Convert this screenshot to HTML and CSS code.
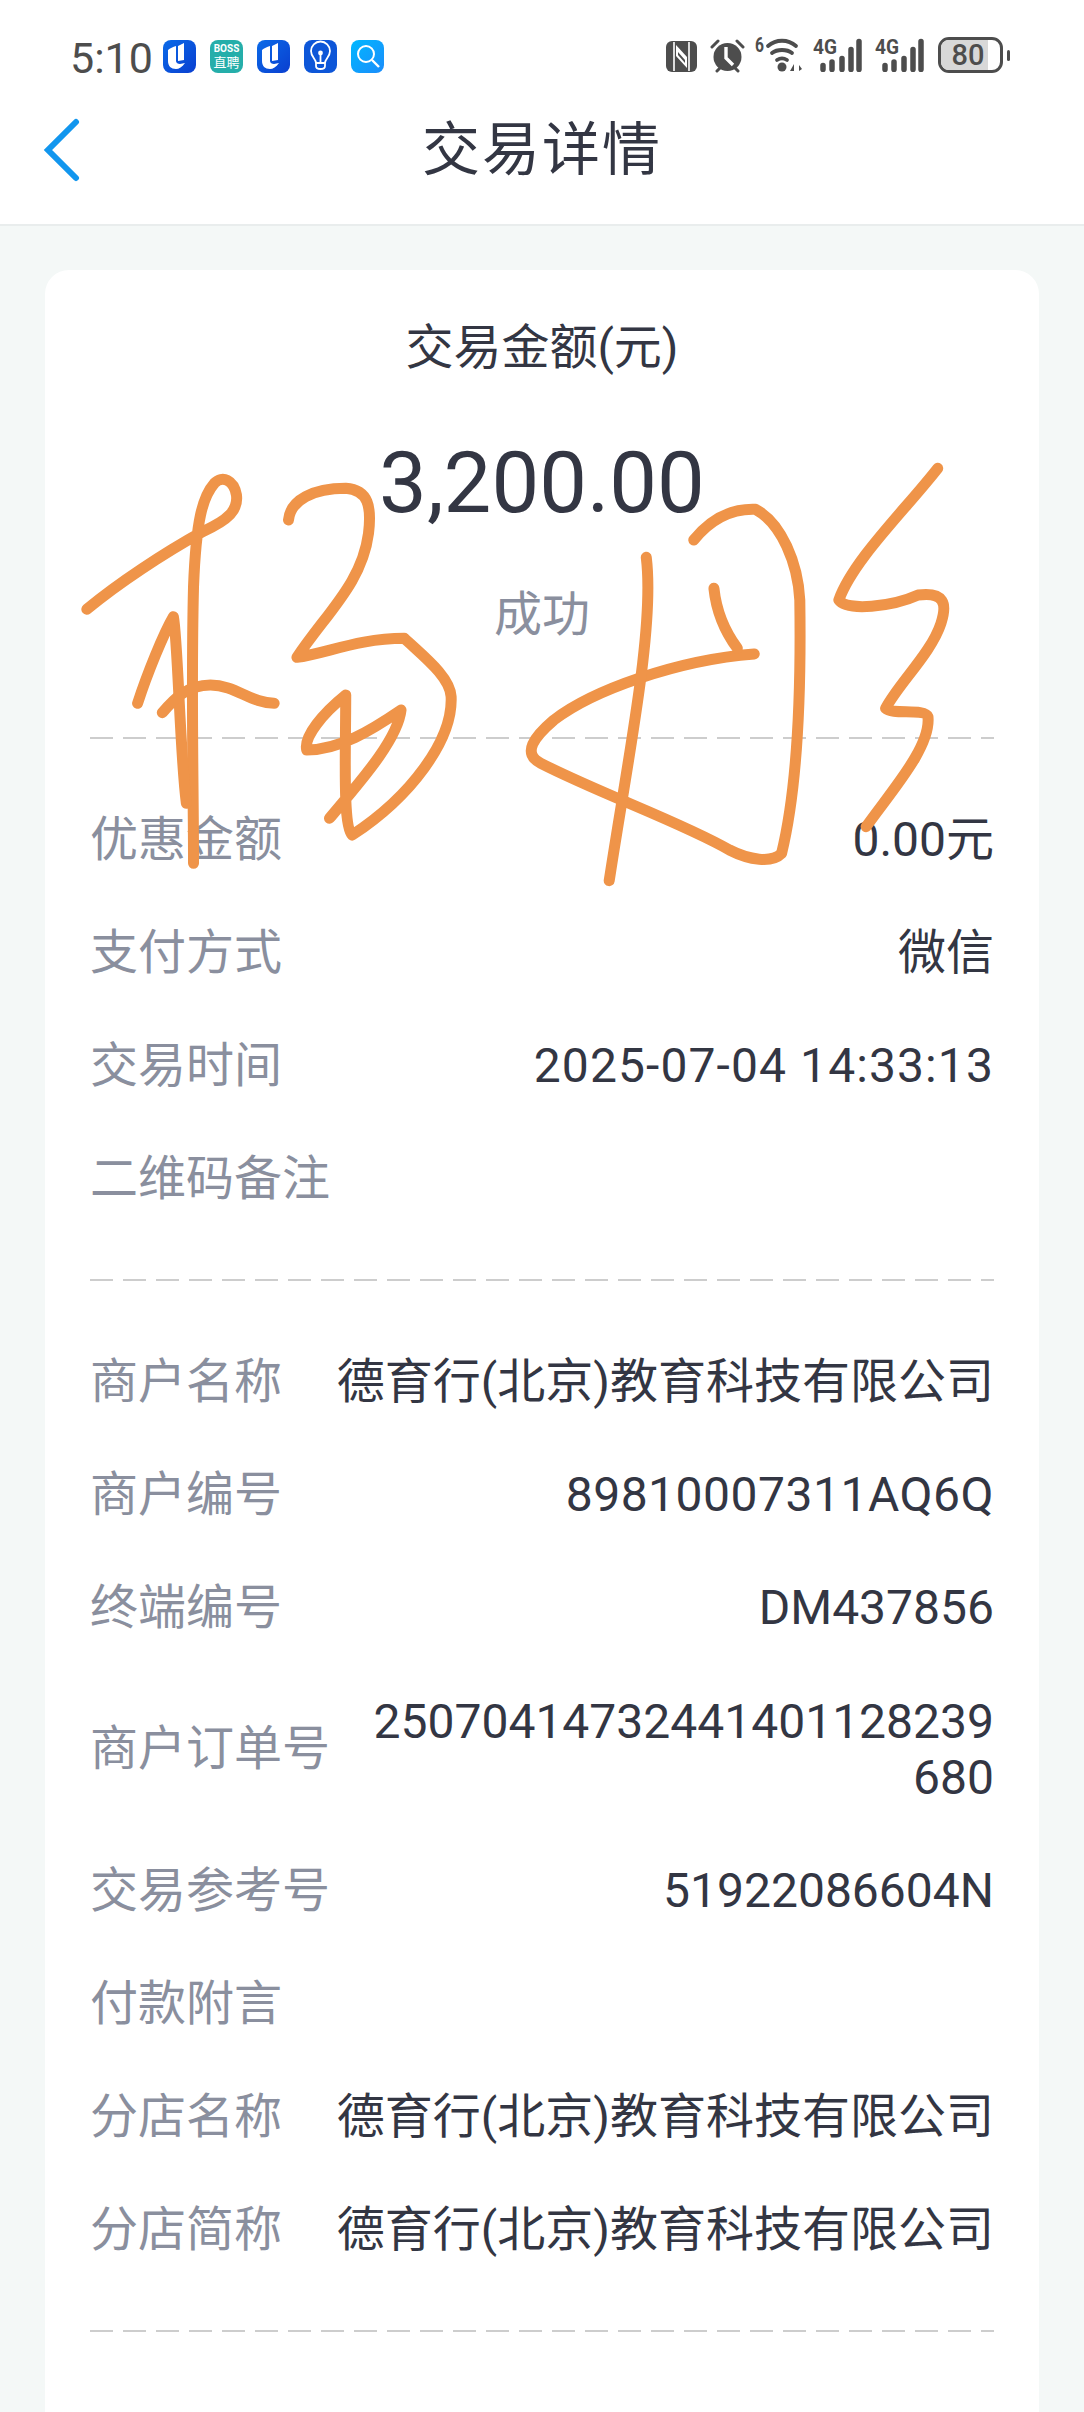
FILE: index.html
```html
<!DOCTYPE html>
<html lang="zh">
  <head>
    <meta charset="UTF-8" />
    <title>交易详情</title>
    <link rel="stylesheet" href="styles.css">
  </head>
  <body>
    <header class="top">
      <div class="status">
        <span class="time">5:10</span>
        <span class="app app-u"><svg viewBox="0 0 33 33"><path d="M5 10c2-2 5-3 8-4v15c0 2 2 3 4 3l5-1c-3 4-6 6-9 6-5 0-8-3-8-8zM15 6l6-3v17l-6 1z" fill="#fff"/></svg></span>
        <span class="app app-boss">BOSS<span class="boss-cn">直聘</span></span>
        <span class="app app-u"><svg viewBox="0 0 33 33"><path d="M5 10c2-2 5-3 8-4v15c0 2 2 3 4 3l5-1c-3 4-6 6-9 6-5 0-8-3-8-8zM15 6l6-3v17l-6 1z" fill="#fff"/></svg></span>
        <span class="app app-bulb"><svg viewBox="0 0 33 33" fill="none" stroke="#fff" stroke-width="1.8"><path d="M12 23c0-4-5-6-5-12a9.500 9.500 0 0 1 19 0c0 6-5 8-5 12zM12 23v3c0 2 2 3 4.500 3s4.500-1 4.500-3v-3M16.500 23v-9"/><circle cx="16.500" cy="13" r="1.500" fill="#fff"/></svg></span>
        <span class="app app-search"><svg viewBox="0 0 33 33" fill="none" stroke="#fff" stroke-width="2"><circle cx="15" cy="14" r="8"/><path d="M21 20l7 7" stroke-width="2.400"/></svg></span>
        <span class="status-right">
          <svg class="ic-nfc" viewBox="0 0 31 31"><rect width="31" height="31" rx="6" fill="#4d4d4d"/><path d="M8 1v29M23 1v29" stroke="#fff" stroke-width="1.600"/><path d="M10 4l11 12v11L10 15z" fill="#fff"/><path d="M12 11l7 8v3l-7-8z" fill="#4d4d4d"/></svg>
          <svg class="ic-alarm" viewBox="0 0 35 34"><circle cx="17.500" cy="18" r="14" fill="#4d4d4d"/><path d="M2 8l6-6M33 8l-6-6M7 32l3-3M28 32l-3-3" stroke="#4d4d4d" stroke-width="3" stroke-linecap="round"/><path d="M16 8v11l7 7" fill="none" stroke="#fff" stroke-width="3.400"/></svg>
          <svg class="ic-wifi" viewBox="0 -8 48 43"><text x="0" y="15" class="ic-mini" textLength="9" lengthAdjust="spacingAndGlyphs">6</text><path d="M13 9c8-7 20-7 28 0M17 16c5-4 15-4 20 0M22 23c3-2 7-2 10 0" fill="none" stroke="#4d4d4d" stroke-width="3.800" stroke-linecap="round"/><circle cx="27" cy="30" r="4.500" fill="#4d4d4d"/><path d="M35 34h4v-7zM41 27v7M44 28l3 4-3 2z" fill="#4d4d4d"/></svg>
          <svg class="ic-signal" viewBox="0 -8 50 42"><text x="0" y="16" class="ic-mini" textLength="24" lengthAdjust="spacingAndGlyphs">4G</text><path d="M10 27.500v4M19 24v7.500M29 20.500v11M38 11.500v20M46 3.500v28" stroke="#4d4d4d" stroke-width="5.500" stroke-linecap="round"/></svg>
          <svg class="ic-signal ic-signal-2" viewBox="0 -8 50 42"><text x="0" y="16" class="ic-mini" textLength="24" lengthAdjust="spacingAndGlyphs">4G</text><path d="M10 27.500v4M19 24v7.500M29 20.500v11M38 11.500v20M46 3.500v28" stroke="#4d4d4d" stroke-width="5.500" stroke-linecap="round"/></svg>
          <span class="battery"><span class="battery-fill"></span><span class="battery-num">80</span></span>
          <span class="battery-tip"></span>
        </span>
      </div>
      <div class="titlebar">
        <svg class="back" viewBox="0 0 40 64" fill="none" stroke="#1296ee" stroke-width="6" stroke-linecap="round"><path d="M35 4L7 32l28 28"/></svg>
        <h1>交易详情</h1>
      </div>
    </header>

    <main class="card">
      <section class="summary dashed">
        <p class="sum-label">交易金额(元)</p>
        <p class="sum-amount">3,200.00</p>
        <p class="sum-status">成功</p>
      </section>

      <div class="rows dashed">
        <div class="row"><span class="k">优惠金额</span><span class="v">0.00元</span></div>
        <div class="row"><span class="k">支付方式</span><span class="v">微信</span></div>
        <div class="row"><span class="k">交易时间</span><span class="v v-date">2025-07-04 14:33:13</span></div>
        <div class="row"><span class="k">二维码备注</span><span class="v"></span></div>
      </div>

      <div class="rows dashed">
        <div class="row"><span class="k">商户名称</span><span class="v">德育行(北京)教育科技有限公司</span></div>
        <div class="row"><span class="k">商户编号</span><span class="v v-wide">89810007311AQ6Q</span></div>
        <div class="row"><span class="k">终端编号</span><span class="v">DM437856</span></div>
        <div class="row row-wrap"><span class="k">商户订单号</span><span class="v">25070414732441401128239680</span></div>
        <div class="row"><span class="k">交易参考号</span><span class="v">51922086604N</span></div>
        <div class="row"><span class="k">付款附言</span><span class="v"></span></div>
        <div class="row"><span class="k">分店名称</span><span class="v">德育行(北京)教育科技有限公司</span></div>
        <div class="row"><span class="k">分店简称</span><span class="v">德育行(北京)教育科技有限公司</span></div>
      </div>

      <svg class="signature" viewBox="0 0 1568 1440" preserveAspectRatio="none" fill="none" stroke="#ef9449" stroke-linecap="round" stroke-linejoin="round">
        <path d="M72 568C120 490 190 400 250 335C290 300 305 270 302 225C298 180 280 165 268 190C250 230 240 300 236 500C232 800 236 1100 236 1330"/>
        <path d="M150 850C165 760 190 640 205 590C212 660 215 1000 225 1150"/>
        <path d="M188 878C205 840 225 795 262 795C300 795 325 850 360 850"/>
        <path d="M382 300C385 240 420 205 470 205C505 210 510 260 505 340C495 490 440 580 395 712C440 700 490 655 560 655C590 710 630 770 632 830C635 960 570 1130 480 1245C465 1220 470 1000 470 825C435 880 405 950 410 990C460 990 510 930 555 870C550 960 490 1090 445 1195"/>
        <path d="M1005 360C1030 300 1060 265 1100 268C1140 310 1165 430 1168 540C1170 800 1165 1100 1140 1300C1125 1330 1090 1320 1060 1290C990 1210 860 1120 770 1030C740 1000 760 950 790 900C850 810 980 720 1098 702"/>
        <path d="M932 412C945 620 905 1000 875 1382"/>
        <path d="M1036 505C1040 580 1055 640 1072 685"/>
        <path d="M1380 145C1330 270 1250 420 1228 540C1240 575 1310 560 1350 525C1390 515 1395 550 1385 610C1370 700 1320 790 1300 865C1310 885 1360 865 1365 890C1370 980 1310 1110 1270 1220"/>
      </svg>
    </main>
  </body>
</html>
```

FILE: styles.css
```css
* {
  margin: 0;
  padding: 0;
  box-sizing: border-box;
}

html,
body {
  height: 2412px;
  overflow: hidden;
}

body {
  background-color: #f4f8f7;
  font-family: "Roboto", "Noto Sans CJK SC", sans-serif;
  color: #333643;
}

.top {
  height: 226px;
  background: #fff;
  border-bottom: 2px solid #e9eded;
}

.status {
  height: 84px;
  padding: 30px 74px 0 70px;
  display: flex;
  align-items: flex-start;
}

.time {
  font-size: 43px;
  line-height: 50px;
  color: #4d4d4d;
  width: 93px;
  margin-top: 3px;
}

.app {
  flex: none;
  width: 33px;
  height: 33px;
  border-radius: 8px;
  margin: 10px 14px 0 0;
  display: block;
  overflow: hidden;
}

.app svg {
  display: block;
  width: 100%;
  height: 100%;
}

.app-u {
  background: linear-gradient(135deg, #0a6ae8, #0a3fd0);
}

.app-boss {
  background: #25aeaa;
  color: #fff;
  font-size: 10px;
  line-height: 13px;
  font-weight: 700;
  text-align: center;
  padding-top: 2px;
}

.boss-cn {
  display: block;
  font-size: 13px;
  line-height: 15px;
  font-weight: 400;
}

.app-bulb {
  background: #0d56d8;
}

.app-search {
  background: linear-gradient(135deg, #00b8ff, #1b8cfb);
}

.status-right {
  margin-left: auto;
  display: flex;
  align-items: flex-start;
  height: 40px;
  margin-top: 7px;
}

.ic-nfc {
  width: 31px;
  height: 31px;
  margin: 4px 13px 0 0;
}

.ic-alarm {
  width: 35px;
  height: 34px;
  margin: 2px 10px 0 0;
}

.ic-wifi {
  width: 48px;
  height: 43px;
  margin: -8px 10px 0 0;
}

.ic-signal {
  width: 50px;
  height: 42px;
  margin: -7px 12px 0 0;
}

.ic-signal-2 {
  margin-right: 13px;
}

.ic-mini {
  font-size: 21px;
  font-weight: 700;
  fill: #4d4d4d;
}

.battery {
  position: relative;
  display: block;
  width: 65px;
  height: 36px;
  border: 3px solid #4d4d4d;
  border-radius: 11px;
  overflow: hidden;
}

.battery-fill {
  display: block;
  width: 80%;
  height: 100%;
  background: #d8d8d8;
}

.battery-num {
  position: absolute;
  left: 0;
  right: 5px;
  top: 0;
  font-size: 29px;
  line-height: 30px;
  text-align: center;
  font-weight: 500;
  color: #4d4d4d;
}

.battery-tip {
  width: 3px;
  height: 11px;
  margin: 13px 0 0 4px;
  background: #4d4d4d;
  border-radius: 2px;
}

.titlebar {
  height: 140px;
  display: flex;
  align-items: center;
  justify-content: center;
  position: relative;
}

.back {
  position: absolute;
  left: 41px;
  top: 34px;
  width: 40px;
  height: 64px;
}

h1 {
  font-size: 58px;
  line-height: 72px;
  font-weight: 400;
  margin-bottom: 9px;
  letter-spacing: 2px;
}

.card {
  position: relative;
  margin: 44px 45px 0;
  height: 2200px;
  padding: 0 45px;
  background: #fff;
  border-radius: 24px;
}

.dashed {
  background: repeating-linear-gradient(to right, #cdcdcd 0 23px, transparent 23px 33px) left bottom / 100% 2px no-repeat;
}

.summary {
  height: 469px;
  padding-top: 48px;
  text-align: center;
}

.sum-label {
  font-size: 48px;
  line-height: 60px;
}

.sum-amount {
  font-size: 85px;
  line-height: 100px;
  margin-top: 55px;
}

.sum-status {
  font-size: 48px;
  line-height: 60px;
  color: #8a8f9e;
  margin-top: 52px;
}

.rows {
  padding: 44px 0 46px;
}

.row {
  display: flex;
  align-items: center;
  justify-content: space-between;
  height: 113px;
  font-size: 48px;
  line-height: 56px;
}

.k {
  flex: none;
  color: #8a8f9e;
}

.v {
  flex: none;
  text-align: right;
}

.v-date {
  letter-spacing: 1.1px;
}

.v-wide {
  letter-spacing: 0.5px;
}

.row-wrap {
  height: 170px;
  padding-top: 2px;
}

.row-wrap .k {
  margin-top: -2px;
}

.row-wrap .v {
  width: 630px;
  word-break: break-all;
}

.signature {
  position: absolute;
  left: -5px;
  top: 150px;
  width: 1020px;
  height: 480px;
  overflow: visible;
}

.signature path {
  stroke-width: 11px;
  vector-effect: non-scaling-stroke;
}
```
